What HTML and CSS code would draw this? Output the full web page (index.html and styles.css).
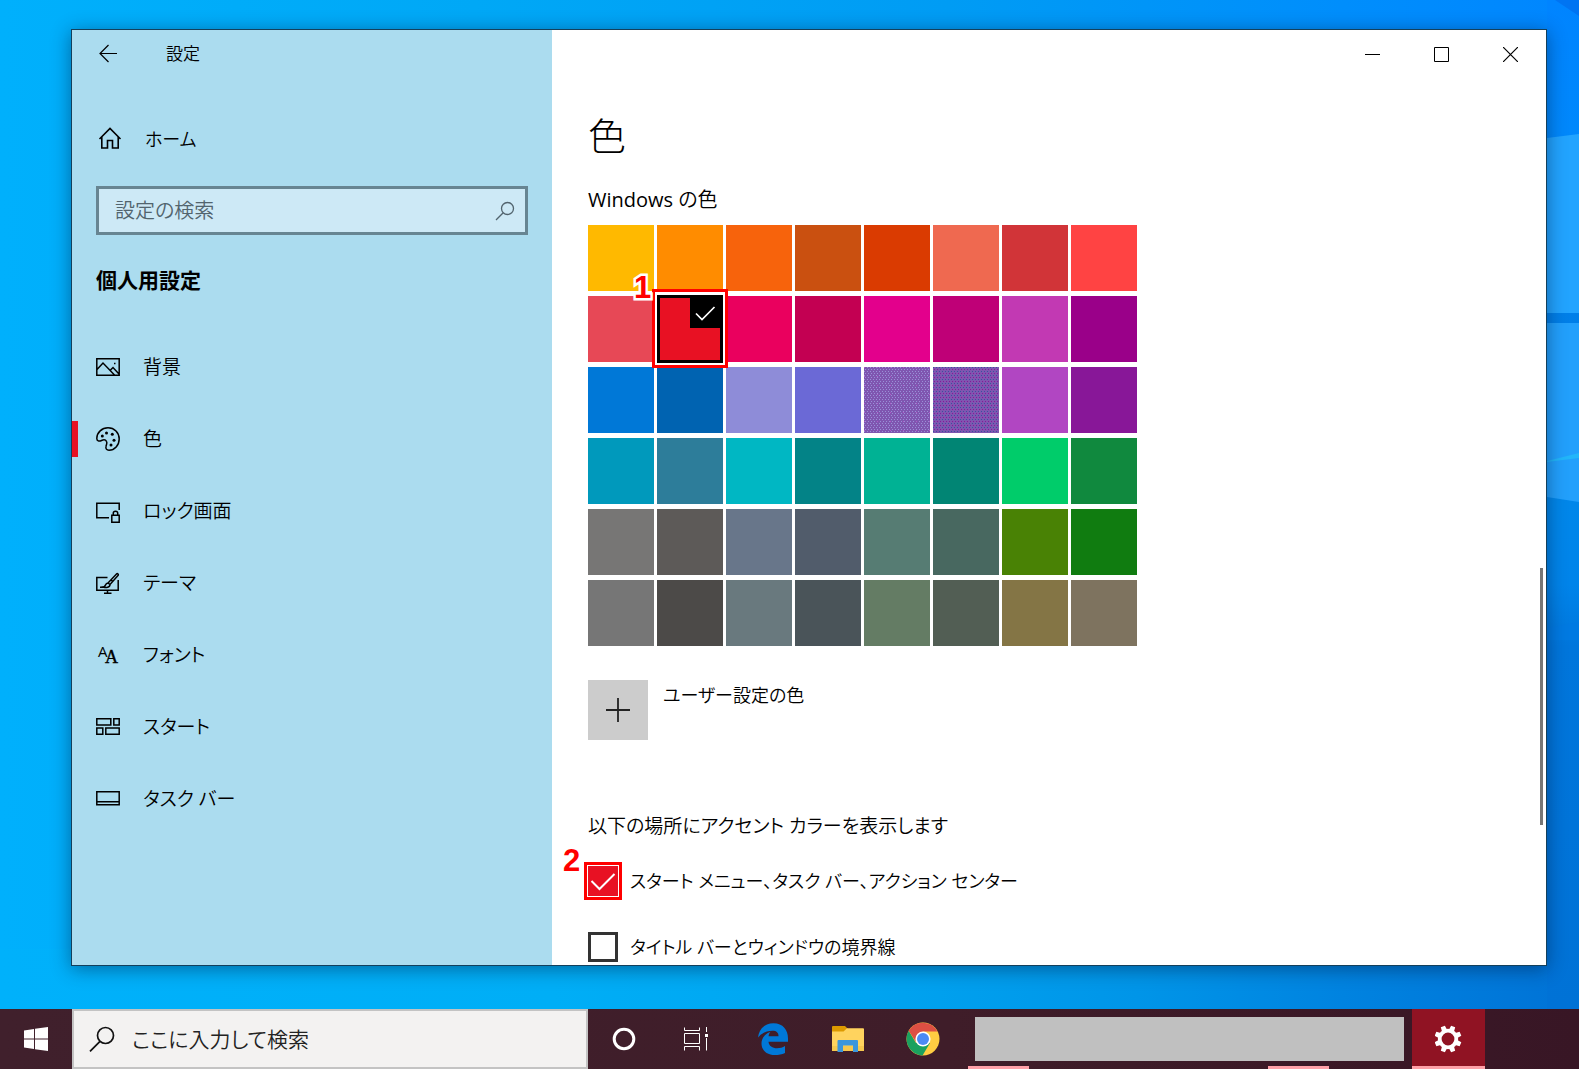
FILE: index.html
```html
<!DOCTYPE html>
<html lang="ja">
<head>
<meta charset="utf-8">
<meta name="viewport" content="width=device-width, initial-scale=1">
<title>設定</title>
<link rel="stylesheet" href="styles.css">
</head>
<body>
<div class="desktop">
  <svg class="wallpaper-rays" viewBox="0 0 32 1009" preserveAspectRatio="none" aria-hidden="true">
    <defs>
      <linearGradient id="sky" x1="0" y1="0" x2="0" y2="1"><stop offset="0" stop-color="#0084ff"/><stop offset=".13" stop-color="#0088fc"/><stop offset=".32" stop-color="#007fe8"/><stop offset=".5" stop-color="#0087ea"/><stop offset=".58" stop-color="#0084ea"/><stop offset=".64" stop-color="#0076dc"/><stop offset="1" stop-color="#0072d6"/></linearGradient>
    </defs>
    <rect width="32" height="1009" fill="url(#sky)"/>
    <path d="M0 138L32 134V313H0z" fill="#22a4ff"/>
    <path d="M0 323H32V502L0 497z" fill="#22a0fc"/>
    <path d="M0 461L32 453V458L0 462z" fill="#22b6fa"/>
    <path d="M0 628L32 622V640H0z" fill="#007ae2"/>
    <path d="M8 0H32V16z" fill="#0074f2"/>
  </svg>
  <main class="window">
    <aside class="sidebar">
      <header class="sidebar-bar">
        <button class="back" type="button" aria-label="戻る"><svg width="20" height="20" viewBox="0 0 20 20"><path d="M19 9.500H2M10.500 1L2 9.500L10.500 18" fill="none" stroke="#000" stroke-width="1.200"/></svg></button>
        <span class="app-name">設定</span>
      </header>
      <a class="home" href="#"><svg width="24" height="24" viewBox="0 0 24 24" fill="none" stroke="#000" stroke-width="1.600"><path d="M1.500 12L12 1.500L22.500 12M3.800 10V21H9.500V13.500H14.500V21H20.200V10"/></svg>ホーム</a>
      <div class="search">
        <input type="search" aria-label="設定の検索" placeholder="設定の検索">
        <svg width="20" height="20" viewBox="0 0 20 20" fill="none" stroke="#52646e" stroke-width="1.300"><circle cx="12.500" cy="7.500" r="6"/><path d="M8.200 11.800L1 19"/></svg>
      </div>
      <h2 class="category">個人用設定</h2>
      <nav class="nav">
        <a href="#"><svg width="24" height="24" viewBox="0 0 24 24" fill="none" stroke="#000" stroke-width="1.500"><path d="M.8 3.800H23.200V20.200H.8zM1 14.500L7 8L18.500 20M14 15.500L17 12.500L23 19"/><path d="M18 8.500h1.500"/></svg>背景</a>
        <a href="#" class="current" aria-current="page"><svg width="24" height="24" viewBox="0 0 24 24"><path d="M12 .8C18.300 .8 23.200 5.800 23.200 12S18.500 23.200 13 23.200C10.500 23.200 9.500 21.500 10 19.500C10.500 17 11.500 16 10.500 14.300C9.500 12.500 7.500 12.500 5.500 13.500C3 14.700 .8 14 .8 11.500C.8 5.500 6 .8 12 .8z" fill="none" stroke="#000" stroke-width="1.500"/><circle cx="6.300" cy="9" r="1.500"/><circle cx="10.500" cy="6" r="1.500"/><circle cx="16.300" cy="7.300" r="1.500"/><circle cx="18" cy="13.300" r="1.500"/><circle cx="15" cy="18" r="1.500"/></svg>色</a>
        <a href="#"><svg width="24" height="24" viewBox="0 0 24 24" fill="none" stroke="#000" stroke-width="1.500"><path d="M13 18.800H.8V4.300H23.200V11M15.800 16.300H23.200V23.200H15.800zM17.300 16V14C17.300 11.500 21.700 11.500 21.700 14V16"/></svg>ロック画面</a>
        <a href="#"><svg width="24" height="24" viewBox="0 0 24 24" fill="none" stroke="#000" stroke-width="1.500"><path d="M11.500 6.500H.8V19.200H22.200V9M11.500 19.500V22.200M8 22.300H15.500M4 16.200H9.500"/><path d="M12 12L20.500 3C21.500 2 23 3.500 22 4.500L14 13.500zM7.500 16C9.500 15.500 9 12.500 12 12L14 13.500C14 16.500 10 17 7.500 16zM15 8.800L17 10.800" /></svg>テーマ</a>
        <a href="#"><svg class="font-icon" width="24" height="24" viewBox="0 0 24 24" aria-hidden="true"><text x="2" y="14" font-size="15">A</text><text class="serif" x="9" y="20" font-size="18">A</text></svg>フォント</a>
        <a href="#"><svg width="24" height="24" viewBox="0 0 24 24" fill="none" stroke="#000" stroke-width="1.500"><path d="M.8 3.800H14.800V10H.8zM17.800 3.800H23.200V10H17.800zM.8 13H6.800V19.200H.8zM9.800 13H23.200V19.200H9.800z"/></svg>スタート</a>
        <a href="#"><svg width="24" height="24" viewBox="0 0 24 24" fill="none" stroke="#000" stroke-width="1.500"><path d="M.8 4.800H23.200V17.700H.8zM1 14.800H23"/></svg>タスク バー</a>
      </nav>
    </aside>
    <section class="content">
      <div class="controls">
        <button type="button" aria-label="最小化"><svg width="15" height="15" viewBox="0 0 15 15"><path d="M0 7.500H15" stroke="#000"/></svg></button>
        <button type="button" aria-label="最大化"><svg width="15" height="15" viewBox="0 0 15 15"><path d="M.5 .5H14.500V14.500H.5z" fill="none" stroke="#000"/></svg></button>
        <button type="button" aria-label="閉じる"><svg width="15" height="15" viewBox="0 0 15 15"><path d="M0 0L15 15M15 0L0 15" stroke="#000" stroke-width="1.200"/></svg></button>
      </div>
      <div class="page">
        <h1>色</h1>
        <h2 class="label"><span class="latin" lang="en">Windows</span> の色</h2>
        <div class="swatches">
          <button type="button" aria-label="#ffb900" style="background:#ffb900"></button><button type="button" aria-label="#ff8c00" style="background:#ff8c00"></button><button type="button" aria-label="#f7630c" style="background:#f7630c"></button><button type="button" aria-label="#ca5010" style="background:#ca5010"></button><button type="button" aria-label="#da3b01" style="background:#da3b01"></button><button type="button" aria-label="#ef6950" style="background:#ef6950"></button><button type="button" aria-label="#d13438" style="background:#d13438"></button><button type="button" aria-label="#ff4343" style="background:#ff4343"></button>
          <button type="button" aria-label="#e74856" style="background:#e74856"></button>
          <div class="picked">
            <button type="button" aria-label="#e81123" aria-pressed="true" style="background:#e81123"><svg width="33" height="33" viewBox="0 0 33 33"><path d="M0 0H33V33H0z"/><path d="M6 18.500L12 24.500L24.500 12" fill="none" stroke="#fff" stroke-width="1.700"/></svg></button>
            <span class="callout"></span><span class="step step-one">1</span>
          </div>
          <button type="button" aria-label="#ea005e" style="background:#ea005e"></button><button type="button" aria-label="#c30052" style="background:#c30052"></button><button type="button" aria-label="#e3008c" style="background:#e3008c"></button><button type="button" aria-label="#bf0077" style="background:#bf0077"></button><button type="button" aria-label="#c239b3" style="background:#c239b3"></button><button type="button" aria-label="#9a0089" style="background:#9a0089"></button>
          <button type="button" aria-label="#0078d7" style="background:#0078d7"></button><button type="button" aria-label="#0063b1" style="background:#0063b1"></button><button type="button" aria-label="#8e8cd8" style="background:#8e8cd8"></button><button type="button" aria-label="#6b69d6" style="background:#6b69d6"></button><button type="button" class="dots-light" aria-label="#8764b8"></button><button type="button" class="dots-dark" aria-label="#744da9"></button><button type="button" aria-label="#b146c2" style="background:#b146c2"></button><button type="button" aria-label="#881798" style="background:#881798"></button>
          <button type="button" aria-label="#0099bc" style="background:#0099bc"></button><button type="button" aria-label="#2d7d9a" style="background:#2d7d9a"></button><button type="button" aria-label="#00b7c3" style="background:#00b7c3"></button><button type="button" aria-label="#038387" style="background:#038387"></button><button type="button" aria-label="#00b294" style="background:#00b294"></button><button type="button" aria-label="#018574" style="background:#018574"></button><button type="button" aria-label="#00cc6a" style="background:#00cc6a"></button><button type="button" aria-label="#10893e" style="background:#10893e"></button>
          <button type="button" aria-label="#7a7574" style="background:#777675"></button><button type="button" aria-label="#5d5a58" style="background:#5d5a58"></button><button type="button" aria-label="#68768a" style="background:#68768a"></button><button type="button" aria-label="#515c6b" style="background:#515c6b"></button><button type="button" aria-label="#567c73" style="background:#567c73"></button><button type="button" aria-label="#486860" style="background:#486860"></button><button type="button" aria-label="#498205" style="background:#498205"></button><button type="button" aria-label="#107c10" style="background:#107c10"></button>
          <button type="button" aria-label="#767676" style="background:#767676"></button><button type="button" aria-label="#4c4a48" style="background:#4c4a48"></button><button type="button" aria-label="#69797e" style="background:#69797e"></button><button type="button" aria-label="#4a5459" style="background:#4a5459"></button><button type="button" aria-label="#647c64" style="background:#647c64"></button><button type="button" aria-label="#525e54" style="background:#525e54"></button><button type="button" aria-label="#847545" style="background:#847545"></button><button type="button" aria-label="#7e735f" style="background:#7e735f"></button>
        </div>
        <div class="custom">
          <button id="custom" type="button" aria-labelledby="custom-label"><svg width="24" height="24" viewBox="0 0 24 24"><path d="M12 0V24M0 12H24" stroke="#222" stroke-width="1.800"/></svg></button>
          <label id="custom-label" for="custom">ユーザー設定の色</label>
        </div>
        <h2 class="label places">以下の場所にアクセント カラーを表示します</h2>
        <div class="option marked">
          <input id="opt-start" type="checkbox" checked>
          <label for="opt-start">スタート メニュー、タスク バー、アクション センター</label>
          <span class="step step-two">2</span>
        </div>
        <div class="option">
          <input id="opt-title" type="checkbox">
          <label for="opt-title">タイトル バーとウィンドウの境界線</label>
        </div>
      </div>
      <span class="scroll-thumb"></span>
    </section>
  </main>
</div>
<footer class="taskbar">
  <button class="start" type="button" aria-label="スタート"><svg width="24" height="24" viewBox="0 0 24 24" fill="#fff"><path d="M0 3.500L10 2V11.600H0zM11 1.800L24 0V11.600H11zM0 12.600H10V22L0 20.600zM11 12.600H24V24L11 22.200z"/></svg></button>
  <div class="task-search">
    <svg width="26" height="26" viewBox="0 0 26 26" fill="none" stroke="#111" stroke-width="1.700"><circle cx="16.500" cy="9.500" r="8"/><path d="M11 15.300L1 25.300"/></svg>
    <input type="search" aria-label="検索" placeholder="ここに入力して検索">
  </div>
  <button class="tool" type="button" aria-label="Cortana"><svg width="24" height="24" viewBox="0 0 24 24"><circle cx="12" cy="12" r="9.800" fill="none" stroke="#fff" stroke-width="3"/></svg></button>
  <button class="tool" type="button" aria-label="タスク ビュー"><svg width="24" height="24" viewBox="0 0 24 24" fill="none" stroke="#fff"><path d="M.5 .5V3.500H15.500V.5M.5 6.500H15.500V16.500H.5zM.5 23.500V19.500H15.500V23.500M22.500 0V5M22.500 11V23.500"/><path d="M21 7H24V10H21z" fill="#fff" stroke="none"/></svg></button>
  <div class="pins">
    <button type="button" aria-label="Microsoft Edge"><svg width="32" height="32" viewBox="0 0 32 32"><path d="M1 14.500C2 6 8 .3 16.500 .3C26 .3 31 7 31 15.500V18.800H11.500C11.800 23 15.500 25.300 20 25.300C23 25.300 25.800 24.300 28 23V30C25 31.500 21.500 32 18 32C10 32 4.500 27.500 4.500 20.500C4.500 15.500 7.500 11 13.500 8.800C12.200 10.200 11.700 11.800 11.600 13.300H21.500C21.500 9.700 19.500 7.800 15.500 7.800C9.500 7.800 4 10.500 1 14.500z" fill="#0078d7"/></svg></button>
    <button type="button" aria-label="エクスプローラー"><svg width="32" height="32" viewBox="0 0 32 32"><path d="M0 4Q0 3 1 3H13L15.500 5.500V10H0z" fill="#dd9a00"/><path d="M0 8.500H11.500L15 5.300H31Q32 5.300 32 6V28H0z" fill="#ffd35e"/><path d="M0 23H32V28H0z" fill="#f6c84e"/><path d="M5.500 29V18Q5.500 17 6.500 17H25Q26 17 26 18V29H21V22.500H11V29z" fill="#3b96dc"/></svg></button>
    <button type="button" aria-label="Google Chrome"><svg width="34" height="34" viewBox="0 0 34 34"><circle cx="17" cy="17" r="16.500" fill="#ffcd42"/><path d="M17 17L24 21L16.500 33.500A16.500 16.500 0 0 1 2.700 8.800L10 21z" fill="#1aa15f"/><path d="M2.700 8.800A16.500 16.500 0 0 1 31.400 9.500H17L10 20z" fill="#dd4f43"/><circle cx="17" cy="17" r="7.600" fill="#fff"/><circle cx="17" cy="17" r="6" fill="#4b8af4"/></svg></button>
  </div>
  <div class="open-apps"><span class="cover"></span><span class="running"></span><span class="running last"></span></div>
  <button class="settings-task" type="button" aria-label="設定"><svg width="28" height="28" viewBox="-13 -14 28 28"><g fill="#fff"><g id="teeth"><path id="tooth" d="M-2.800-8L-2.200-13.500H2.200L2.800-8zM-2.800 8L-2.200 13.500H2.200L2.800 8z" transform="rotate(22.500)"/><use href="#tooth" transform="rotate(45)"/></g><use href="#teeth" transform="rotate(90)"/></g><circle r="8.300" fill="none" stroke="#fff" stroke-width="3.800"/></svg></button>
</footer>
</body>
</html>
```
FILE: styles.css
```css
* { box-sizing: border-box; }

body {
  margin: 0;
  height: 100vh;
  display: flex;
  flex-direction: column;
  overflow: hidden;
  color: #000;
  font-family: "Open Sans", "Noto Sans CJK JP", sans-serif;
  font-size: 20px;
  font-weight: 350;
  line-height: 30px;
  font-feature-settings: "palt";
}

h1, h2 { margin: 0; font-weight: inherit; font-size: inherit; }
button { border: 0; padding: 0; background: none; font: inherit; }
input { font: inherit; font-feature-settings: inherit; }
a { color: inherit; text-decoration: none; }
svg { display: block; flex: none; }

/* desktop and window */
.desktop {
  position: relative;
  flex: 1;
  min-height: 0;
  padding: 29px 32px 43px 71px;
  background:
    linear-gradient(90deg, #00b1fb 0, #00aef6 35%, #00a4f0 55%, #0095e8 72%, #0083e0 85%, #0072d6 100%) bottom / 100% 60px no-repeat,
    linear-gradient(90deg, #00b0fc 0, #00a8f6 30%, #009cf4 60%, #008efc 85%, #0086ff 100%);
}
.wallpaper-rays { position: absolute; top: 0; right: 0; width: 32px; height: 100%; }
.window {
  position: relative;
  display: flex;
  height: 100%;
  border: 1px solid #13405c;
  background: #fff;
  box-shadow: 0 3px 18px rgba(0, 20, 50, .45);
}

/* sidebar */
.sidebar { width: 480px; flex: none; padding: 0 24px; background: #abdcef; overflow: hidden; }
.sidebar-bar { display: flex; align-items: center; height: 48px; font-size: 17px; }
.back { margin-left: 2px; }
.app-name { margin-left: 48px; }
.home { display: flex; align-items: center; height: 60px; margin-top: 31px; padding-left: 2px; gap: 23px; font-size: 18px; }
.search {
  display: flex;
  align-items: center;
  height: 49px;
  margin-top: 17px;
  padding: 0 10px 0 16px;
  border: 3px solid #678592;
  background: #cde9f6;
}
.search input { flex: 1; min-width: 0; padding: 0; border: 0; background: none; outline: 0; }
.search input::placeholder { color: #52646e; opacity: 1; }
.category { margin-top: 30px; font-size: 21px; font-weight: 700; }
.nav { margin: 36px -24px 0; font-size: 19px; }
.nav a { position: relative; display: flex; align-items: center; height: 72px; padding: 0 24px; gap: 23px; }
.nav .current::before {
  content: "";
  position: absolute;
  left: 0;
  width: 6px;
  height: 36px;
  background: #e81123;
}
.font-icon { overflow: visible; font-family: "Open Sans", sans-serif; font-weight: 500; }
.font-icon .serif { font-family: "Liberation Serif", serif; font-weight: 400; stroke: #000; stroke-width: .4px; }

/* content */
.content { position: relative; flex: 1; min-width: 0; overflow: hidden; }
.controls { display: flex; justify-content: flex-end; height: 48px; padding-right: 1px; }
.controls button { display: grid; place-items: center; width: 69px; }
.page { padding: 31px 36px 0; }
.page h1 { font-size: 38px; font-weight: 300; line-height: 52px; }
.label { margin-top: 24px; }
.latin { font-weight: 400; }
.swatches {
  display: grid;
  grid-template-columns: repeat(8, 66px);
  grid-auto-rows: 66px;
  gap: 5px 3px;
  margin-top: 10px;
}
.dots-light {
  background:
    conic-gradient(at 1px 1px, transparent 75%, #b05ac8 0) 0 0 / 13px 9px,
    conic-gradient(at 1px 1px, transparent 75%, #9a90d8 0) 0 0 / 3px 4px,
    conic-gradient(at 1px 1px, transparent 75%, #9a90d8 0) 1px 2px / 3px 4px #7f56b0;
}
.dots-dark {
  background:
    conic-gradient(at 1px 1px, transparent 75%, #3a50a0 0) 0 0 / 3px 4px,
    conic-gradient(at 1px 1px, transparent 75%, #881798 0) 1px 2px / 3px 4px #7f56b0;
}
.picked { position: relative; }
.picked button { display: flex; justify-content: flex-end; width: 66px; height: 68px; margin-top: -1px; border: 3px solid #000; }
.picked svg { margin: -3px -3px 0 0; }
.callout { position: absolute; inset: -7px -5px -6px; border: 3px solid #f00; }
.step {
  position: absolute;
  color: #f00;
  font: 700 31px/30px "Liberation Sans", sans-serif;
  paint-order: stroke;
  -webkit-text-stroke: 5px #fff;
}
.step-one { left: -23px; top: -23px; }
.step-two { left: -25px; top: -20px; }

.custom { display: flex; gap: 15px; margin-top: 34px; font-size: 18px; }
.custom button { display: grid; place-items: center; width: 60px; height: 60px; background: #ccc; }
.places { margin-top: 71px; font-size: 19px; }
.option { position: relative; display: flex; align-items: center; height: 30px; margin-top: 36px; gap: 12px; font-size: 18px; }
.option input { appearance: none; width: 30px; height: 30px; margin: 0; border: 3px solid #333; background: #fff; }
.option.marked { margin-top: 25px; }
.option input:checked {
  border: 0;
  outline: 3px solid #f00;
  outline-offset: 1px;
  background: #e81123 url("data:image/svg+xml,%3Csvg xmlns='http://www.w3.org/2000/svg' viewBox='0 0 28 28'%3E%3Cpath d='M2.500 14L10.500 22L25.500 7' fill='none' stroke='white' stroke-width='2'/%3E%3C/svg%3E") center / 28px no-repeat;
}
.scroll-thumb { position: absolute; right: 3px; bottom: 15%; width: 3px; height: 257px; background: #767676; }

/* taskbar */
.taskbar { display: flex; flex: none; height: 60px; background: linear-gradient(90deg, #40202c, #3f1d29 60%, #381625); }
.taskbar button { display: grid; place-items: center; }
.start { width: 72px; }
.task-search {
  display: flex;
  align-items: center;
  flex: 0 1 516px;
  padding: 0 15px;
  gap: 17px;
  border: 2px solid #c3c3c3;
  background: #f3f2f1;
  font-size: 21px;
}
.task-search input { flex: 1; min-width: 0; padding: 0; border: 0; background: none; outline: 0; }
.task-search input::placeholder { color: #222; opacity: 1; }
.tool { width: 72px; }
.pins { display: flex; padding: 0 8px 0 3px; }
.pins button { width: 75px; }
.open-apps { position: relative; flex: 1; display: flex; padding: 8px 8px 8px 7px; }
.cover { flex: 1; background: #c0c0c0; }
.running { position: absolute; left: 0; bottom: 0; width: 61px; height: 3px; background: #ffa0a8; }
.running.last { left: auto; right: 83px; }
.settings-task { width: 73px; margin-right: 94px; padding-top: 3px; border-bottom: 3px solid #ffa0a8; background: #901323; }
```
